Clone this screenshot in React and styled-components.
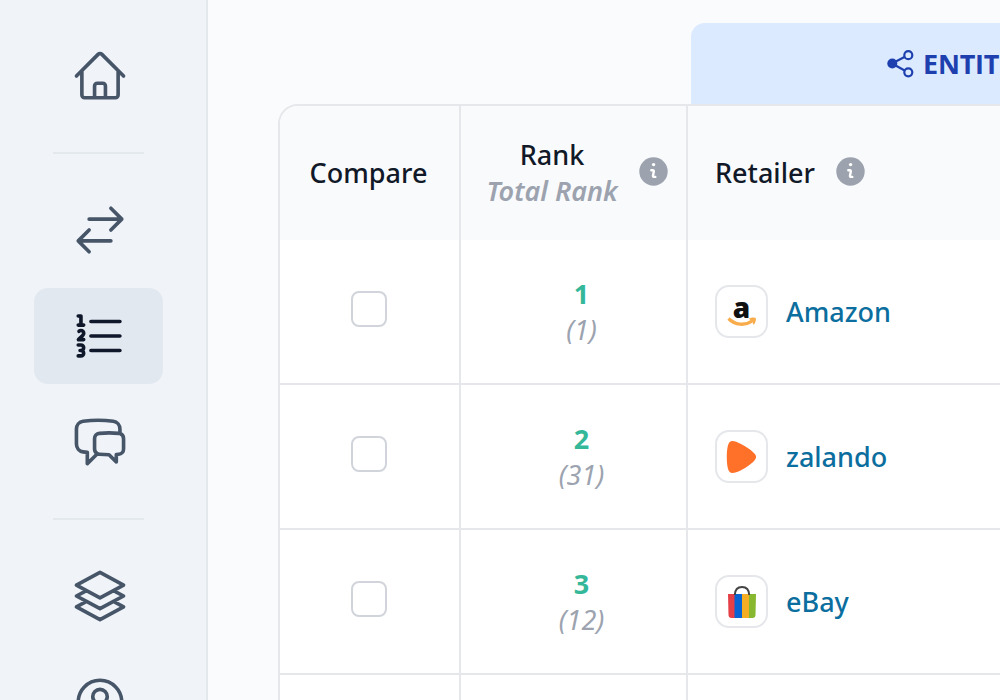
import React from 'react';
import styled, { createGlobalStyle, css } from 'styled-components';
import {
  HiOutlineHome,
  HiOutlineArrowsRightLeft,
  HiOutlineNumberedList,
  HiOutlineChatBubbleLeftRight,
  HiOutlineSquare3Stack3D,
  HiOutlineUserCircle,
} from 'react-icons/hi2';

const GlobalStyle = createGlobalStyle`
  * {
    box-sizing: border-box;
  }
  body {
    margin: 0;
    overflow: hidden;
  }
`;

const Page = styled.div`
  display: flex;
  width: 100vw;
  height: 100vh;
  overflow: hidden;
  font-family: 'Noto Sans', 'Open Sans', sans-serif;
  background: #f9fbfd;
  color: #111827;
`;

const Sidebar = styled.nav`
  flex: none;
  display: flex;
  flex-direction: column;
  align-items: center;
  width: 208px;
  height: 100%;
  padding: 28px 9px 0 0;
  background: #f0f4f9;
  border-right: 2px solid #e3e8ed;
  overflow: hidden;
`;

const NavItem = styled.a`
  flex: none;
  display: flex;
  align-items: center;
  justify-content: center;
  width: 129px;
  height: 96px;
  margin-bottom: 10px;
  padding-left: 2px;
  border-radius: 14px;
  color: ${props => (props.$active ? '#0f172a' : '#475569')};
  background: ${props => (props.$active ? '#e2e8f0' : 'transparent')};
  svg {
    width: 58px;
    height: 58px;
  }
`;

const Divider = styled.hr`
  flex: none;
  width: 91px;
  height: 2px;
  margin: 18px 0 28px;
  border: 0;
  background: #e3e8ec;
`;

const Main = styled.main`
  flex: 1;
  min-width: 0;
  padding: 23px 0 0 70px;
  overflow: hidden;
`;

const GroupHeader = styled.div`
  display: flex;
  align-items: center;
  width: 600px;
  height: 81px;
  margin-left: 413px;
  padding-left: 195px;
  gap: 9px;
  border-top-left-radius: 14px;
  background: #dbeafe;
  color: #1e40af;
  font-family: 'Open Sans', sans-serif;
  font-size: 27px;
  font-weight: 700;
  letter-spacing: -0.2px;
  white-space: nowrap;
`;

const Table = styled.div`
  width: 1000px;
  height: 700px;
  border: 2px solid #e5e7eb;
  border-top-left-radius: 20px;
  background: #fff;
  overflow: hidden;
`;

const columns = css`
  display: grid;
  grid-template-columns: 181px 227px 1fr;
`;

const HeaderRow = styled.div`
  ${columns}
  height: 134px;
  background: #f9fafc;
`;

const Row = styled.div`
  ${columns}
  height: 145px;
  border-bottom: 2px solid #e5e7eb;
`;

const Cell = styled.div`
  display: flex;
  align-items: center;
  justify-content: ${props => (props.$start ? 'flex-start' : 'center')};
  padding: ${props => props.$pad || '0'};
  gap: ${props => props.$gap || '0'};
  border-right: 2px solid #e5e7eb;
  font-size: 27px;
  font-weight: 500;
  line-height: 36px;
`;

const Stack = styled.div`
  display: flex;
  flex-direction: column;
  align-items: center;
`;

const TotalRank = styled.em`
  color: #9ca3af;
  font-weight: 600;
`;

const Checkbox = styled.span`
  width: 36px;
  height: 36px;
  border: 2px solid #d1d5db;
  border-radius: 8px;
  background: #fff;
`;

const Rank = styled.span`
  color: #34b899;
  font-weight: 700;
`;

const Total = styled.em`
  color: #9ca3af;
  font-weight: 400;
`;

const LogoBox = styled.span`
  flex: none;
  display: flex;
  align-items: center;
  justify-content: center;
  width: 53px;
  height: 53px;
  border: 2px solid #e5e7eb;
  border-radius: 14px;
`;

const RetailerLink = styled.a`
  color: #0b6e9e;
`;

const InfoSvg = styled.svg`
  flex: none;
  margin-top: -2px;
`;

const InfoIcon = () => (
  <InfoSvg width="29" height="29" viewBox="0 0 29 29">
    <circle cx="14.500" cy="14.500" r="14.200" fill="#9ca3af" />
    <circle cx="14.600" cy="7.600" r="1.700" fill="#fff" />
    <path
      d="M12.300 13.200h1.400c.9 0 1.300.7 1.100 1.500l-.8 3.700c-.2.900.3 1.500 1.100 1.500h1.200"
      fill="none"
      stroke="#fff"
      strokeWidth="2.400"
      strokeLinecap="round"
    />
  </InfoSvg>
);

const ShareIcon = () => (
  <svg width="28" height="28" viewBox="0 0 28 28" fill="none" stroke="currentColor" strokeWidth="2.200">
    <path d="M6 13.500 21.800 5.200M6 13.500l15.800 8.700" />
    <circle cx="6.300" cy="13.500" r="5" fill="currentColor" stroke="none" />
    <circle cx="22.300" cy="5.200" r="4" fill="#dbeafe" />
    <circle cx="22.300" cy="22.300" r="4" fill="#dbeafe" />
  </svg>
);

const AmazonMark = styled.span`
  position: relative;
  width: 32px;
  height: 32px;
  text-align: center;
  font: 800 28px/23px 'Open Sans', sans-serif;
  color: #111;
  svg {
    position: absolute;
    left: 1px;
    bottom: 0;
  }
`;

const AmazonLogo = () => (
  <AmazonMark>
    a
    <svg width="32" height="12" viewBox="0 0 32 12" fill="none">
      <path d="M1.500 2.500C8 9.300 18 10 25 5" stroke="#f9ac4b" strokeWidth="3.300" />
      <path d="M21.500 2.500c3-1.200 6-1.500 7.200-.6.700 1.500-.2 5-2 7l-1.600-3.600z" fill="#f9ac4b" />
    </svg>
  </AmazonMark>
);

const ZalandoLogo = () => (
  <svg width="32" height="34" viewBox="0 0 32 34">
    <path
      d="M3.500 2.200C5.500.2 9 .8 15 4c6 3.200 12.500 7.600 14.300 10.600 1 1.600 1 3 0 4.600C27.500 22.500 21 27 15 30.200c-6 3-9.500 3.600-11.500 1.600C1.500 29.500.8 23 .8 17s.7-12.500 2.700-14.800z"
      fill="#ff7029"
    />
  </svg>
);

const EbayLogo = () => (
  <svg width="30" height="34" viewBox="0 0 30 34">
    <path d="M1 9h7v24H4.500Q1.700 33 1.500 30z" fill="#e53f48" />
    <path d="M7.500 9H15v24H7.500z" fill="#0864d2" />
    <path d="M15 9h7v24h-7z" fill="#f5ae24" />
    <path d="M22 9h7l-.5 21q-.2 3-3 3H22z" fill="#87b82f" />
    <path d="M7.800 10C8 4.500 10.500 2 15 2s7 2.500 7.200 8" fill="none" stroke="#444" strokeWidth="2" />
  </svg>
);

const groups = [
  [{ id: 'home', Icon: HiOutlineHome }],
  [
    { id: 'compare', Icon: HiOutlineArrowsRightLeft },
    { id: 'ranking', Icon: HiOutlineNumberedList, active: true },
    { id: 'chat', Icon: HiOutlineChatBubbleLeftRight },
  ],
  [
    { id: 'stack', Icon: HiOutlineSquare3Stack3D },
    { id: 'account', Icon: HiOutlineUserCircle },
  ],
];

const retailers = [
  { rank: 1, total: 1, name: 'Amazon', Logo: AmazonLogo },
  { rank: 2, total: 31, name: 'zalando', Logo: ZalandoLogo },
  { rank: 3, total: 12, name: 'eBay', Logo: EbayLogo },
];

const App = () => (
  <>
    <GlobalStyle />
    <Page>
      <Sidebar>
        {groups.map((items, i) => (
          <React.Fragment key={items[0].id}>
            {i > 0 && <Divider />}
            {items.map(({ id, Icon, active }) => (
              <NavItem key={id} $active={active}>
                <Icon />
              </NavItem>
            ))}
          </React.Fragment>
        ))}
      </Sidebar>
      <Main>
        <GroupHeader>
          <ShareIcon />
          ENTIT
        </GroupHeader>
        <Table>
          <HeaderRow>
            <Cell $pad="0 2px 1px 0">Compare</Cell>
            <Cell $gap="21px" $pad="0 0 1px 7px">
              <Stack>
                <span>Rank</span>
                <TotalRank>Total Rank</TotalRank>
              </Stack>
              <InfoIcon />
            </Cell>
            <Cell $start $gap="21px" $pad="0 0 1px 27px">
              Retailer
              <InfoIcon />
            </Cell>
          </HeaderRow>
          {retailers.map(({ rank, total, name, Logo }) => (
            <Row key={name}>
              <Cell $pad="0 2px 5px 0">
                <Checkbox />
              </Cell>
              <Cell $pad="0 0 0 16px">
                <Stack>
                  <Rank>{rank}</Rank>
                  <Total>({total})</Total>
                </Stack>
              </Cell>
              <Cell $start $gap="18px" $pad="0 0 0 27px">
                <LogoBox>
                  <Logo />
                </LogoBox>
                <RetailerLink>{name}</RetailerLink>
              </Cell>
            </Row>
          ))}
          <Row>
            <Cell />
            <Cell />
            <Cell />
          </Row>
        </Table>
      </Main>
    </Page>
  </>
);

export default App;
